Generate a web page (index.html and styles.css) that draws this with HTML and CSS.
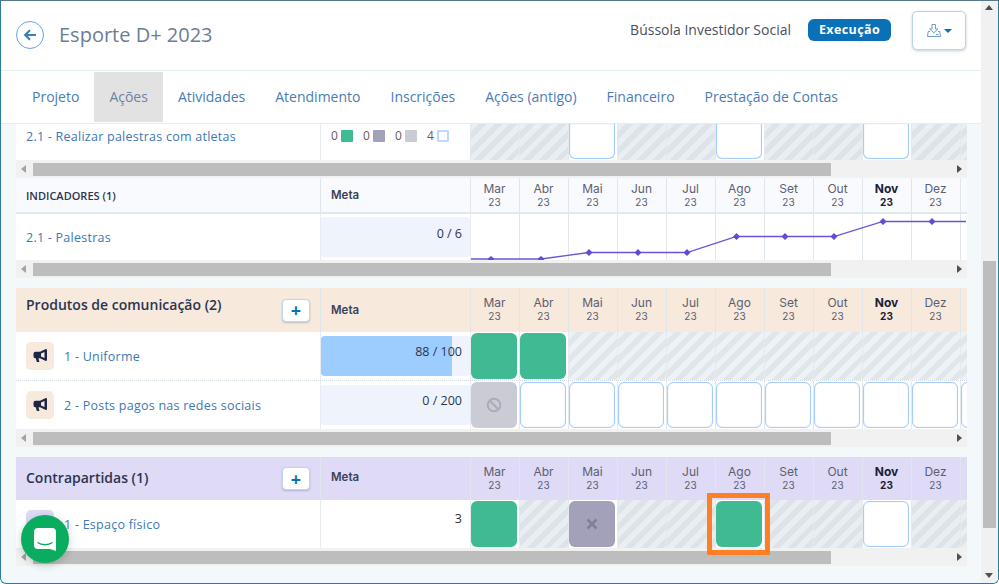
FILE: index.html
```html
<!DOCTYPE html>
<html lang="pt-BR">
<head>
<meta charset="utf-8">
<title>Esporte D+ 2023</title>
<link rel="stylesheet" href="styles.css">
</head>
<body>
<div class="window">
  <div class="page">
    <header class="topbar">
      <a class="back" aria-label="Voltar"><svg width="14" height="14" viewBox="0 0 14 14"><path d="M13 7H3M7 2.200 2.200 7 7 11.800" fill="none" stroke="#3d7fbc" stroke-width="2.200"/></svg></a>
      <h1 class="title">Esporte D+ 2023</h1>
      <span class="org">Bússola Investidor Social</span>
      <span class="badge">Execução</span>
      <button class="download"><svg width="14" height="13" viewBox="0 0 14 13"><path d="M5 .5h3.500v4.500H11L6.800 8.800 2.600 5H5zM3 7.500H1.200L.5 12.500h13l-.7-5H11M9 10.500h2.500" fill="none" stroke="#6f9bc8" stroke-width="1"/></svg><i class="caret"></i></button>
    </header>
    <nav class="tabs">
      <a class="tab">Projeto</a>
      <a class="tab active">Ações</a>
      <a class="tab">Atividades</a>
      <a class="tab">Atendimento</a>
      <a class="tab">Inscrições</a>
      <a class="tab">Ações (antigo)</a>
      <a class="tab">Financeiro</a>
      <a class="tab">Prestação de Contas</a>
    </nav>
    <main class="content">
      <section class="block">
        <div class="grid row-top">
          <div class="name top-name"><a class="link">2.1 - Realizar palestras com atletas</a></div>
          <div class="legend">
            <span>0</span><i class="sq green"></i><span>0</span><i class="sq purple"></i><span>0</span><i class="sq grey"></i><span>4</span><i class="sq open"></i>
          </div>
          <div class="cell hatch"></div><div class="cell hatch"></div><div class="cell top-open"><b class="box open-box"></b></div><div class="cell hatch"></div><div class="cell hatch"></div><div class="cell top-open"><b class="box open-box"></b></div><div class="cell hatch"></div><div class="cell hatch"></div><div class="cell top-open"><b class="box open-box"></b></div><div class="cell hatch"></div><div class="cell hatch"></div>
        </div>
        <div class="hscroll"><i class="arr left"></i><b class="thumb"></b><i class="arr right"></i></div>
      </section>

      <section class="block">
        <div class="grid head head-ind">
          <div class="head-name caps">INDICADORES (1)</div>
          <div class="meta-head">Meta</div>
          <div class="mon">Mar<small>23</small></div><div class="mon">Abr<small>23</small></div><div class="mon">Mai<small>23</small></div><div class="mon">Jun<small>23</small></div><div class="mon">Jul<small>23</small></div><div class="mon">Ago<small>23</small></div><div class="mon">Set<small>23</small></div><div class="mon">Out<small>23</small></div><div class="mon now">Nov<small>23</small></div><div class="mon">Dez<small>23</small></div><div class="mon"></div>
        </div>
        <div class="grid row-ind">
          <div class="name"><a class="link">2.1 - Palestras</a></div>
          <div class="metacell"><div class="meter">0 / 6</div></div>
          <div class="cell line"></div><div class="cell line"></div><div class="cell line"></div><div class="cell line"></div><div class="cell line"></div><div class="cell line"></div><div class="cell line"></div><div class="cell line"></div><div class="cell line"></div><div class="cell line"></div><div class="cell line"></div>
          <svg class="chart" width="495" height="46" viewBox="0 0 495 46">
            <path d="M0 45 70 45 118 38.500 167 38.500 216 38.500 265.500 22.500 314 22.500 363 22.500 412 7.500 461 7.500 495 7.500" fill="none" stroke="#6a55d6" stroke-width="1.300"/>
            <path fill="#5f4bd4" d="M20 42l3.500 3-3.500 3-3.500-3zM70 42l3.500 3-3.500 3-3.500-3zM118 35l3.500 3.500-3.500 3.500-3.500-3.500zM167 35l3.500 3.500-3.500 3.500-3.500-3.500zM216 35l3.500 3.500-3.500 3.500-3.500-3.500zM265.500 19l3.500 3.500-3.500 3.500-3.500-3.500zM314 19l3.500 3.500-3.500 3.500-3.500-3.500zM363 19l3.500 3.500-3.500 3.500-3.500-3.500zM412 4l3.500 3.500-3.500 3.500-3.500-3.500zM461 4l3.500 3.500-3.500 3.500-3.500-3.500z"/>
          </svg>
        </div>
        <div class="hscroll"><i class="arr left"></i><b class="thumb"></b><i class="arr right"></i></div>
      </section>

      <section class="block gap-top">
        <div class="grid head head-prod">
          <div class="head-name sect"><span class="sect-up">Produtos de comunicação (2)</span><button class="plus">+</button></div>
          <div class="meta-head">Meta</div>
          <div class="mon">Mar<small>23</small></div><div class="mon">Abr<small>23</small></div><div class="mon">Mai<small>23</small></div><div class="mon">Jun<small>23</small></div><div class="mon">Jul<small>23</small></div><div class="mon">Ago<small>23</small></div><div class="mon">Set<small>23</small></div><div class="mon">Out<small>23</small></div><div class="mon now">Nov<small>23</small></div><div class="mon">Dez<small>23</small></div><div class="mon"></div>
        </div>
        <div class="grid row-item dotted">
          <div class="name item"><span class="ico"><svg width="15" height="14" viewBox="0 0 15 14"><path fill="#1d2744" d="M14 0.500v11L12.800 12 7 9.300H5.500l.9 3.700H3.800L2.800 9.300A2 2 0 0 1 .5 7.300V4.700a2 2 0 0 1 2-2H7L12.800 0zM11.500 3 8 4.500v3L11.500 9z" fill-rule="evenodd"/></svg></span><a class="link">1 - Uniforme</a></div>
          <div class="metacell"><div class="meter"><span class="fill fill-88"></span><span class="meter-text">88 / 100</span></div></div>
          <div class="cell"><b class="box done"></b></div><div class="cell"><b class="box done"></b></div><div class="cell hatch light"></div><div class="cell hatch light"></div><div class="cell hatch light"></div><div class="cell hatch light"></div><div class="cell hatch light"></div><div class="cell hatch light"></div><div class="cell hatch light"></div><div class="cell hatch light"></div><div class="cell hatch light"></div>
        </div>
        <div class="grid row-item">
          <div class="name item"><span class="ico"><svg width="15" height="14" viewBox="0 0 15 14"><path fill="#1d2744" d="M14 0.500v11L12.800 12 7 9.300H5.500l.9 3.700H3.800L2.800 9.300A2 2 0 0 1 .5 7.300V4.700a2 2 0 0 1 2-2H7L12.800 0zM11.500 3 8 4.500v3L11.500 9z" fill-rule="evenodd"/></svg></span><a class="link">2 - Posts pagos nas redes sociais</a></div>
          <div class="metacell"><div class="meter">0 / 200</div></div>
          <div class="cell"><b class="box blocked"><svg width="16" height="16" viewBox="0 0 16 16"><circle cx="8" cy="8" r="6.300" fill="none" stroke="#aaadb6" stroke-width="2"/><path d="M3.800 3.800l8.400 8.400" stroke="#aaadb6" stroke-width="2"/></svg></b></div><div class="cell"><b class="box open-box"></b></div><div class="cell"><b class="box open-box"></b></div><div class="cell"><b class="box open-box"></b></div><div class="cell"><b class="box open-box"></b></div><div class="cell"><b class="box open-box"></b></div><div class="cell"><b class="box open-box"></b></div><div class="cell"><b class="box open-box"></b></div><div class="cell"><b class="box open-box"></b></div><div class="cell"><b class="box open-box"></b></div><div class="cell"><b class="box open-box"></b></div>
        </div>
        <div class="hscroll"><i class="arr left"></i><b class="thumb"></b><i class="arr right"></i></div>
      </section>

      <section class="block gap-top">
        <div class="grid head head-contra">
          <div class="head-name sect"><span class="sect-mid">Contrapartidas (1)</span><button class="plus">+</button></div>
          <div class="meta-head">Meta</div>
          <div class="mon">Mar<small>23</small></div><div class="mon">Abr<small>23</small></div><div class="mon">Mai<small>23</small></div><div class="mon">Jun<small>23</small></div><div class="mon">Jul<small>23</small></div><div class="mon">Ago<small>23</small></div><div class="mon">Set<small>23</small></div><div class="mon">Out<small>23</small></div><div class="mon now">Nov<small>23</small></div><div class="mon">Dez<small>23</small></div><div class="mon"></div>
        </div>
        <div class="grid row-item">
          <div class="name item"><span class="ico ico-purple"></span><a class="link">1 - Espaço físico</a></div>
          <div class="metacell"><div class="meter plain">3</div></div>
          <div class="cell"><b class="box done"></b></div><div class="cell hatch"></div><div class="cell"><b class="box missed"><svg width="12" height="12" viewBox="0 0 12 12"><path d="M1.500 1.500l9 9M10.500 1.500l-9 9" stroke="#807f96" stroke-width="2.600"/></svg></b></div><div class="cell hatch"></div><div class="cell hatch"></div><div class="cell"><b class="box done"></b></div><div class="cell hatch"></div><div class="cell hatch"></div><div class="cell"><b class="box open-box"></b></div><div class="cell hatch"></div><div class="cell hatch"></div>
        </div>
        <div class="hscroll"><i class="arr left"></i><b class="thumb"></b><i class="arr right"></i></div>
        <div class="highlight"></div>
      </section>
    </main>
  </div>
  <div class="vscroll"><i class="varr up"></i><b class="vtrack"><b class="vthumb"></b></b><i class="varr down"></i></div>
  <a class="chat" aria-label="Chat"><svg width="24" height="25" viewBox="0 0 24 25"><path fill="#fff" d="M5 1h14a4 4 0 0 1 4 4v19l-6-2H5a4 4 0 0 1-4-4V5a4 4 0 0 1 4-4z"/><path d="M4.500 15.500c4 3 11 3 15 0" fill="none" stroke="#0aad5f" stroke-width="1.500"/></svg></a>
</div>
</body>
</html>
```

FILE: styles.css
```css
* { box-sizing: border-box; }
html, body { margin: 0; padding: 0; height: 100%; overflow: hidden; }
body { font-family: "Open Sans", "Liberation Sans", sans-serif; color: #2b3550; }

.window {
  width: 999px; height: 584px; display: flex; position: relative; overflow: hidden;
  border: 1px solid #2b7d98; border-top-color: #56788a; border-radius: 0 0 6px 6px;
  background: #f3f8fb;
}
.page { width: 980px; height: 582px; display: flex; flex-direction: column; }

.topbar { height: 70px; flex: none; background: #fff; border-bottom: 1px solid #e3eef3; display: flex; align-items: center; padding: 0 15px 0 15px; }
.back { width: 28px; height: 28px; border: 1px solid #64a4e2; border-radius: 50%; display: flex; align-items: center; justify-content: center; flex: none; margin-top: -1px; }
.title { margin: -2px 0 0 15px; font-size: 20px; font-weight: 400; color: #6c7d94; flex: 1; }
.org { font-size: 14px; color: #4a4f5e; margin-top: -12px; }
.badge { margin: -12px 0 0 17px; width: 83px; height: 22px; border-radius: 6px; background: #0a70b8; color: #fff; font-size: 12.500px; font-weight: 700; display: flex; align-items: center; justify-content: center; letter-spacing: .4px; }
.download { margin: -10px 0 0 21px; width: 54px; height: 39px; border: 1px solid #b9d3ea; border-radius: 5px; background: #fff; box-shadow: 0 1px 3px rgba(80,120,160,.35); display: flex; align-items: center; justify-content: center; gap: 3px; padding: 0; }
.caret { border: 4px solid transparent; border-top: 4.500px solid #0a70b8; border-bottom: 0; width: 0; height: 0; }

.tabs { height: 53px; flex: none; background: #fff; border-bottom: 1px solid #e3eef3; display: flex; padding: 1px 0 0 16px; }
.tab { height: 50px; padding: 0 15px 2px; display: flex; align-items: center; font-size: 14px; color: #4a7cb5; }
.tab.active { background: #e2e2e2; color: #6d84a3; }

.content { flex: 1; padding: 0 14px 0 15px; display: flex; flex-direction: column; overflow: hidden; }
.block { width: 951px; flex: none; position: relative; }
.gap-top { margin-top: 10px; }

.grid { display: grid; grid-template-columns: 305px 150px repeat(11, 49px); overflow: hidden; position: relative; }
.row-top { height: 36px; background: #fff; }
.head-ind { height: 36px; background: #f9fafe; border-bottom: 2px solid #e1e9ee; }
.row-ind { height: 46px; background: #fff; }
.head-prod { height: 44px; background: #f7e9dc; }
.head-contra { height: 43px; background: #dfdaf6; }
.row-item { height: 48px; background: #fff; }
.dotted { border-bottom: 1px dotted #d5dce2; height: 49px; }

.name { padding-left: 10px; font-size: 12.500px; display: flex; align-items: center; border-right: 1px solid #e6ecf0; }
.top-name { align-items: flex-start; padding-top: 4px; }
.link { color: #3c78b4; letter-spacing: 0.25px; }
.item { gap: 10px; }
.ico { width: 28px; height: 28px; border-radius: 5px; background: #f7e9dc; display: flex; align-items: center; justify-content: center; flex: none; }
.ico-purple { background: #dfdaf6; }

.legend { display: flex; align-items: flex-start; padding: 4px 0 0 10px; font-size: 12px; color: #6b5a50; border-right: 1px solid #e1e9ee; }
.legend span { width: 9px; line-height: 16px; }
.sq { width: 12px; height: 12px; margin: 2px 10px 0 1px; border-radius: 1px; }
.sq:last-child { margin-right: 0; }
.green { background: #3fba93; }
.purple { background: #a3a1b9; }
.grey { background: #cbcbd6; }
.open { background: #fff; border: 2px solid #bcd9fc; }

.head-name { padding-left: 10px; display: flex; align-items: center; color: #2b3550; border-right: 1px solid #dfe7ec; }
.caps { font-size: 11px; font-weight: 600; color: #2b3550; }
.sect { font-size: 14px; font-weight: 600; justify-content: space-between; padding: 0 10px 0 10px; }
.sect-up { margin-top: -12px; }
.sect-mid { margin-top: -2px; }
.plus { width: 28px; height: 23px; border: 1px solid #bcd6ec; border-radius: 4px; background: #fff; color: #0a70b8; font: 700 18px/18px "Open Sans", sans-serif; padding: 0; box-shadow: 0 1px 2px rgba(70,110,160,.35); }
.meta-head { padding-left: 10px; display: flex; align-items: center; font: 600 11.500px Inter, sans-serif; color: #3a4258; border-right: 1px solid #dfe7ec; }
.head-contra .meta-head { padding-bottom: 3px; }
.mon { text-align: center; font: 400 12px/14px Inter, sans-serif; color: #5c5f70; padding: 4px 1px 0 0; border-right: 1px solid #dfe7ec; }
.mon small { display: block; font-size: 10px; line-height: 13px; }
.head-prod .mon, .head-contra .mon { padding-top: 8px; }
.now { font-weight: 700; color: #1b2036; }

.metacell { padding: 4px 0; border-right: 1px solid #e6ecf0; }
.row-ind .metacell { padding: 3px 0 0; }
.meter { height: 40px; background: #eff4fc; border-radius: 3px; font-size: 12.500px; color: #2b3550; text-align: right; padding: 7px 8px 0 0; position: relative; overflow: hidden; }
.row-ind .meter { padding-top: 8px; }
.fill { position: absolute; left: 0; top: 0; bottom: 0; background: #9dcdff; border-radius: 3px 0 0 3px; }
.fill-88 { width: 88%; }
.meter-text { position: relative; }
.plain { background: none; color: #2a2f3e; padding-top: 6px; }

.cell { border-right: 1px solid #e4e9ec; background: #fff; padding: 1px 0; min-width: 0; }
.line { border-right: 1px solid #dfe7ec; }
.hatch { background: repeating-linear-gradient(135deg, #e9eef2 0 5.500px, #dde3e8 5.500px 11px); }
.light { background: repeating-linear-gradient(135deg, #edf2f6 0 5.500px, #e0e6ea 5.500px 11px); }
.box { display: flex; align-items: center; justify-content: center; width: 46px; height: 46px; border-radius: 6px; }
.done { background: #3fba93; }
.open-box { background: #fff; border: 1px solid #a6cdfb; box-shadow: inset 0 0 1px #a6cdfb; }
.blocked { background: #cbcbd6; }
.missed { background: #a3a1b9; }
.top-open { padding: 0 0 1px; background: #fff; }
.top-open .box { height: 35px; border-top: 0; border-radius: 0 0 6px 6px; }

.chart { position: absolute; left: 455px; top: 0; pointer-events: none; }

.hscroll { height: 18px; background: #f1f1f1; display: flex; align-items: flex-start; padding-top: 3px; position: relative; }
.arr { width: 17px; height: 13px; flex: none; position: relative; }
.arr::after { content: ""; position: absolute; top: 2px; border: 4.500px solid transparent; }
.left::after { left: 5px; border-right: 5px solid #a3a3a3; border-left: 0; }
.right { margin-left: auto; }
.right::after { right: 5px; border-left: 5px solid #505050; border-right: 0; }
.thumb { width: 798px; height: 13px; background: #bdbdbd; }

.highlight { position: absolute; left: 691px; top: 36px; width: 63px; height: 62px; border: 5px solid #ff7f27; }

.vscroll { width: 17px; height: 582px; background: #f1f1f1; display: flex; flex-direction: column; flex: none; }
.varr { height: 17px; flex: none; position: relative; }
.varr::after { content: ""; position: absolute; left: 4px; border: 4.500px solid transparent; }
.up::after { top: 4px; border-bottom: 5px solid #505050; border-top: 0; }
.down::after { bottom: 5px; border-top: 5px solid #505050; border-bottom: 0; }
.vtrack { flex: 1; display: block; padding: 243px 2px 0 2px; }
.vthumb { display: block; height: 267px; background: #bdbdbd; }

.chat { position: absolute; left: 20px; top: 514px; width: 48px; height: 48px; border-radius: 50%; background: #0aad5f; display: flex; align-items: center; justify-content: center; box-shadow: 0 2px 8px rgba(0,0,0,.2); z-index: 3; }
```
